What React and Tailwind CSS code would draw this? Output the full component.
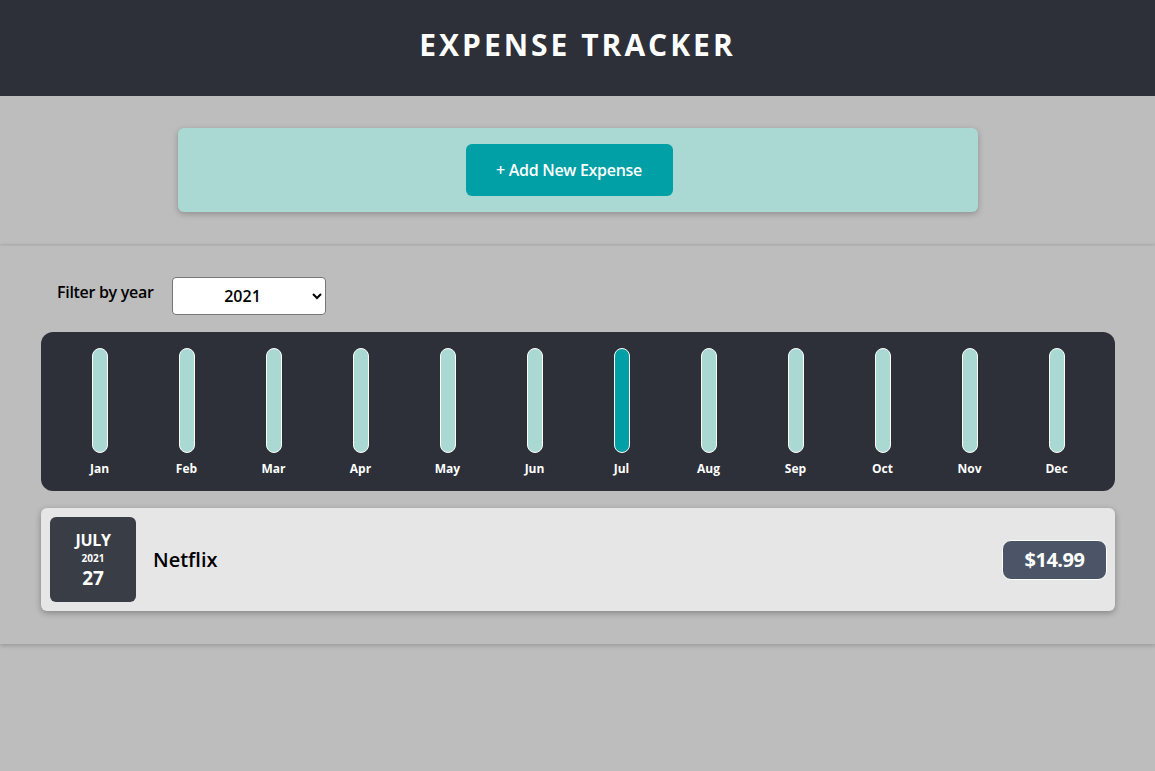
import React from "react";

const months = ["Jan","Feb","Mar","Apr","May","Jun","Jul","Aug","Sep","Oct","Nov","Dec"];

export default function App() {
  return (
    <div className="min-h-[771px] bg-[#bdbdbd]" style={{ fontFamily: '"Open Sans", "Noto Sans", sans-serif' }}>
      <header className="h-[96px] bg-[#2d3039] flex items-center justify-center">
        <h1 className="text-white text-[30px] font-bold tracking-[3px] -mt-[7px] leading-none">EXPENSE TRACKER</h1>
      </header>

      <section className="h-[148px] pt-[32px] shadow-[0_1px_2px_rgba(0,0,0,0.12)] relative">
        <div className="mx-auto w-[800px] h-[84px] bg-[#aad8d3] rounded-[6px] shadow-[0_2px_6px_rgba(0,0,0,0.25)] flex justify-center pt-[16px]">
          <button className="mr-[17px] w-[207px] h-[52px] bg-[#00a0a6] rounded-[6px] text-white text-[16px] font-semibold tracking-[-0.3px]">
            + Add New Expense
          </button>
        </div>
      </section>

      <section className="h-[400px] pl-[41px] pr-[40px] pt-[33px] shadow-[0_2px_4px_rgba(0,0,0,0.18)] relative">
        <div className="flex items-start pl-[16px]">
          <span className="text-[16px] font-semibold text-black mt-[3px] tracking-[-0.3px]">Filter by year</span>
          <select defaultValue="2021" className="ml-[18px] w-[154px] h-[38px] bg-white border border-[#767676] rounded-[4px] text-[16px] font-semibold text-center text-black">
            <option value="2022">2022</option>
            <option value="2021">2021</option>
            <option value="2020">2020</option>
            <option value="2019">2019</option>
          </select>
        </div>

        <div className="mt-[17px] h-[159px] bg-[#2d3039] rounded-[12px] px-[15px] pt-[16px] grid grid-cols-12">
          {months.map((m) => (
            <div key={m} className="flex flex-col items-center">
              <div className={`w-[16px] h-[105px] rounded-full border border-white ${m === "Jul" ? "bg-[#00a0a6]" : "bg-[#aad8d3]"}`} />
              <span className="mt-[7px] text-white text-[12px] font-bold">{m}</span>
            </div>
          ))}
        </div>

        <div className="mt-[17px] h-[103px] bg-[#e6e6e6] rounded-[6px] shadow-[0_2px_6px_rgba(0,0,0,0.3)] pl-[9px] pr-[8px] py-[9px] flex items-center">
          <div className="w-[86px] h-[85px] bg-[#393d46] rounded-[6px] flex flex-col items-center justify-center text-white">
            <span className="text-[16px] leading-[22px] font-bold tracking-[-0.3px]">JULY</span>
            <span className="text-[10px] leading-[14px] font-bold">2021</span>
            <span className="text-[19px] leading-[26px] font-bold">27</span>
          </div>
          <span className="ml-[17px] text-[20px] font-semibold text-black">Netflix</span>
          <div className="ml-auto w-[105px] h-[40px] bg-[#4b5567] border border-white rounded-[9px] flex items-center justify-center text-white text-[20px] font-bold tracking-[-0.5px]">
            $14.99
          </div>
        </div>
      </section>
    </div>
  );
}
